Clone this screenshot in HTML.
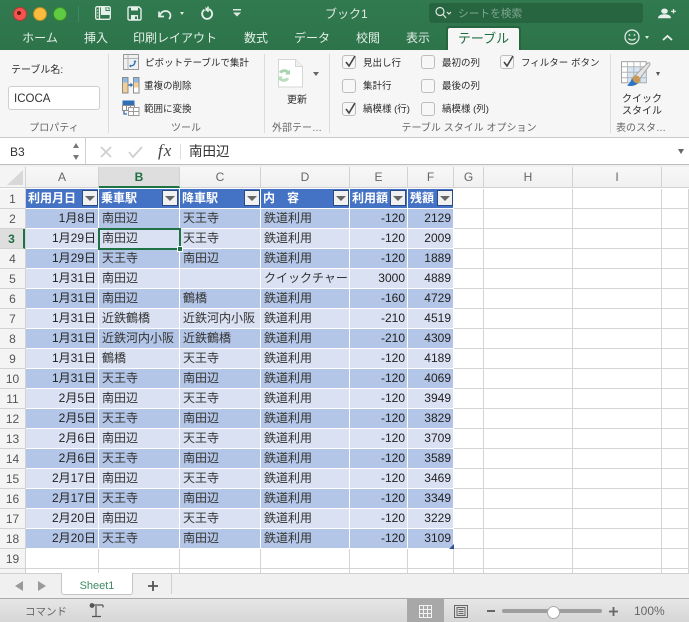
<!DOCTYPE html>
<html lang="ja"><head><meta charset="utf-8"><style>
html,body{margin:0;padding:0}
body{width:689px;height:622px;overflow:hidden;position:relative;background:#fff;font-family:"Liberation Sans","Noto Sans CJK JP",sans-serif;color:#222}
.a{position:absolute;white-space:nowrap}
svg{position:absolute;overflow:visible}
.tab{top:30px;font-size:12px;line-height:17px;color:#e4efe8;transform:translateX(-50%)}
.rl{font-size:9.5px;line-height:14px;color:#2a2a2a}
.gl{top:122px;font-size:10px;line-height:13px;color:#666;transform:translateX(-50%)}
.sep{top:54px;width:1px;height:79px;background:#dcdcdc}
.cb{width:12px;height:12px;background:#f7f7f7;border:1px solid #bdbdbd;border-radius:3px}
.ch{top:167px;height:21px;line-height:20px;font-size:12px;color:#666;text-align:center;background:linear-gradient(#f8f8f8,#f0f0f0);border-right:1px solid #d2d2d2;border-bottom:1px solid #d2d2d2;box-sizing:border-box}
.rh{left:0;width:25px;height:20px;line-height:20px;font-size:12px;color:#555;text-align:center;background:#f4f4f4;border-bottom:1px solid #d2d2d2;box-sizing:border-box}
table{position:absolute;left:26px;top:189px;border-collapse:separate;border-spacing:0;table-layout:fixed;width:663px;font-size:12px}
td{height:19px;padding:0 2px 0 3px;border-right:1px solid #d4d4d4;border-bottom:1px solid #d4d4d4;white-space:nowrap;overflow:hidden;line-height:19px;color:#333}
tr.h td.t{background:#4472c4;color:#fff;font-weight:bold;border-right:1px solid #fff;border-bottom:1px solid #fff;padding:0 2px}
tr.o td.t{background:#b4c6e7;border-right:1px solid #fff;border-bottom:1px solid #fff}
tr.e td.t{background:#d9e1f2;border-right:1px solid #fff;border-bottom:1px solid #fff}
td.r{text-align:right;padding-right:2px;color:#222}
.fb{width:14px;height:14px;background:#f1f1f1;border:1px solid #2a4a85;top:190px}
.fb:after{content:"";position:absolute;left:2px;top:5px;border-left:5px solid transparent;border-right:5px solid transparent;border-top:5px solid #666}
</style></head><body>

<!-- title bar -->
<div class="a" style="left:0;top:0;width:689px;height:50px;background:linear-gradient(#31794f,#2d744a)"></div>
<div class="a" style="left:13px;top:7px;width:12px;height:12px;border-radius:50%;background:#f2544e;border:.5px solid #b03a36"></div>
<div class="a" style="left:17px;top:11px;width:4px;height:4px;border-radius:50%;background:#6d1712"></div>
<div class="a" style="left:33px;top:7px;width:12px;height:12px;border-radius:50%;background:#fcbb3d;border:.5px solid #b98a2a"></div>
<div class="a" style="left:53px;top:7px;width:12px;height:12px;border-radius:50%;background:#5fcb42;border:.5px solid #3f8f2c"></div>
<div class="a" style="left:78px;top:6px;width:1px;height:16px;background:#3f8860"></div>

<svg style="left:95px;top:6px" width="16" height="14" viewBox="0 0 16 14" fill="none" stroke="#e6f0ea" stroke-width="1.300"><rect x=".7" y=".7" width="14.600" height="12.600" rx="1.500"/><path d="M4.500 1v12"/><path d="M6 .7h5.500L15.300 4.500v4.500H6z" fill="#e6f0ea" stroke="none"/><path d="M11 1v3.500h4" stroke="#31794f" stroke-width=".9"/><path d="M2 4h1.300M2 7h1.300M2 10h1.300" stroke-width="1"/></svg>
<svg style="left:127px;top:6px" width="15" height="15" viewBox="0 0 15 15" fill="none" stroke="#e6f0ea" stroke-width="1.400"><path d="M1 2.200C1 1.500 1.500 1 2.200 1H12l2 2v9.800c0 .7-.5 1.200-1.200 1.200H2.200C1.500 14 1 13.500 1 12.800z"/><rect x="4" y="1" width="7" height="3.500" fill="#e6f0ea" stroke="none"/><rect x="4" y="9" width="7" height="5" fill="#e6f0ea" stroke="none"/><rect x="8" y="10.500" width="2" height="2.500" fill="#31794f" stroke="none"/></svg>
<svg style="left:157px;top:8px" width="16" height="12" viewBox="0 0 16 12" fill="none" stroke="#e6f0ea" stroke-width="1.700"><path d="M2 3.500v5h5"/><path d="M2.500 8C4 4 6 3 8.500 3c3 0 5 2 5 4.500 0 1.200-.5 2.500-1.500 3.500"/></svg>
<div class="a" style="left:180px;top:12px;border-left:2.500px solid transparent;border-right:2.500px solid transparent;border-top:3px solid #dfe9e3"></div>
<svg style="left:200px;top:6px" width="14" height="15" viewBox="0 0 14 15" fill="none" stroke="#e6f0ea" stroke-width="1.800"><path d="M9 3.200A5 5 0 1 1 4.500 3.600"/><path d="M8 .5v5.500" stroke-width="1.600"/><path d="M5.500 1l3.500 2.500-3.500 2" stroke="none" fill="#e6f0ea"/></svg>
<svg style="left:233px;top:9px" width="9" height="8" viewBox="0 0 9 8" fill="#dfe9e3"><rect x="0" y="0" width="8" height="1.500"/><path d="M0 3.500h8L4 7.500z"/></svg>
<div class="a" style="left:325px;top:6px;font-size:12px;line-height:16px;color:#dfe9e3">ブック1</div>
<div class="a" style="left:429px;top:3px;width:214px;height:20px;border-radius:3px;background:#266540"></div>
<svg style="left:435px;top:7px" width="18" height="13" viewBox="0 0 18 13" fill="none" stroke="#dce8e0" stroke-width="1.200"><circle cx="5" cy="4.500" r="4"/><path d="M8 7.500l3 3.500"/><path d="M12 5l2 2 2-2"/></svg>
<div class="a" style="left:458px;top:7px;font-size:10.700px;line-height:15px;color:#7fa791">シートを検索</div>
<svg style="left:658px;top:8px" width="18" height="11" viewBox="0 0 18 14" preserveAspectRatio="none" fill="#e6f0ea"><circle cx="6.500" cy="4" r="3.300"/><path d="M0 13c0-3.500 3-5 6.500-5s6.500 1.500 6.500 5z"/><path d="M13 3.500h1.800V1.500h1.400v2H18v1.400h-1.800v2h-1.400v-2H13z"/></svg>

<div class="a tab" style="left:40px">ホーム</div>
<div class="a tab" style="left:96px">挿入</div>
<div class="a tab" style="left:175px">印刷レイアウト</div>
<div class="a tab" style="left:256px">数式</div>
<div class="a tab" style="left:312px">データ</div>
<div class="a tab" style="left:368px">校閲</div>
<div class="a tab" style="left:418px">表示</div>
<div class="a" style="left:446px;top:26px;width:75px;height:24px;background:#266540;border-radius:3px 3px 0 0"></div>
<div class="a" style="left:448px;top:28px;width:71px;height:22px;background:#f6f6f6;border-radius:2px 2px 0 0;text-align:center;font-size:13px;line-height:21px;color:#1f6e42">テーブル</div>
<svg style="left:624px;top:29px" width="18" height="16" viewBox="0 0 18 16" fill="none" stroke="#e6f0ea" stroke-width="1.200"><circle cx="8" cy="8" r="7"/><circle cx="5.500" cy="6" r=".9" fill="#e6f0ea" stroke="none"/><circle cx="10.500" cy="6" r=".9" fill="#e6f0ea" stroke="none"/><path d="M4.500 9.500c1 2 6 2 7 0"/></svg>
<div class="a" style="left:645px;top:36px;border-left:2.500px solid transparent;border-right:2.500px solid transparent;border-top:3px solid #dfe9e3"></div>
<svg style="left:662px;top:34px" width="11" height="7" viewBox="0 0 11 7" fill="none" stroke="#e6f0ea" stroke-width="1.800"><path d="M1 6l4.500-4L10 6"/></svg>

<!-- ribbon -->
<div class="a" style="left:0;top:50px;width:689px;height:87px;background:#f6f6f6;border-bottom:1px solid #c8c8c8"></div>
<div class="a sep" style="left:108px"></div>
<div class="a sep" style="left:264px"></div>
<div class="a sep" style="left:329px"></div>
<div class="a sep" style="left:610px"></div>

<div class="a rl" style="left:11px;top:64px;font-size:10px">テーブル名:</div>
<div class="a" style="left:8px;top:86px;width:85px;height:22px;background:#fff;border:1px solid #cfcfcf;border-radius:3px;font-size:11.500px;line-height:25px;padding-left:5px;color:#333">ICOCA</div>
<div class="a gl" style="left:54px">プロパティ</div>

<svg style="left:123px;top:54px" width="17" height="16" viewBox="0 0 17 16" fill="none"><rect x=".5" y=".5" width="15" height="15" fill="#eef0f2" stroke="#9a9a9a"/><path d="M1 4.500h14M5 1v14" stroke="#b5b5b5"/><path d="M7 12c3 0 5-1.500 5-5" stroke="#2f6fb5" stroke-width="1.300"/><path d="M10.500 8l1.500-2 1.500 2zM8 10.500l-2 1.500 2 1.500z" fill="#2f6fb5"/></svg>
<div class="a rl" style="left:145px;top:57px">ピボットテーブルで集計</div>
<svg style="left:122px;top:77px" width="18" height="17" viewBox="0 0 18 17"><rect x=".5" y=".5" width="5.500" height="15.500" fill="#fff" stroke="#8b8b8b"/><rect x="1" y="1" width="4.500" height="4.500" fill="#8eb9e4"/><rect x="1" y="5.500" width="4.500" height="5" fill="#f2cf94"/><rect x="1" y="10.500" width="4.500" height="5" fill="#f2cf94"/><path d="M6.500 8H9" stroke="#2f6fb5" stroke-width="1.500"/><path d="M8.500 5.500L11 8l-2.500 2.500z" fill="#2f6fb5"/><rect x="11.500" y=".5" width="5.500" height="15.500" fill="#fff" stroke="#8b8b8b"/><rect x="12" y="1" width="4.500" height="4.500" fill="#8eb9e4"/><rect x="12" y="5.500" width="4.500" height="5" fill="#f2cf94"/></svg>
<div class="a rl" style="left:144px;top:80px">重複の削除</div>
<svg style="left:122px;top:100px" width="18" height="16" viewBox="0 0 18 16" fill="none"><rect x=".5" y=".5" width="12" height="5" fill="#2f6fb5"/><rect x=".5" y="5.500" width="12" height="5" fill="#fff" stroke="#8b8b8b"/><path d="M4.500 5.500v5M8.500 5.500v5" stroke="#8b8b8b"/><rect x="6.500" y="7.500" width="10.500" height="8" fill="#fff" stroke="#9a9a9a"/><path d="M6.500 11.500H17M11.500 7.500v8" stroke="#9a9a9a"/><path d="M2 11v3h3" stroke="#2f6fb5" stroke-width="1.300"/></svg>
<div class="a rl" style="left:144px;top:103px">範囲に変換</div>
<div class="a gl" style="left:186px">ツール</div>

<svg style="left:278px;top:59px" width="28" height="29" viewBox="0 0 28 29" fill="none"><path d="M.5.500h17l7 7v20.500H.5z" fill="#fff" stroke="#d6d6d6"/><path d="M17.500.500v7h7" stroke="#d6d6d6" fill="#f0f0f0"/><path d="M1 13c1.500-3 7-4 9.500-1l1.500-1.500v5h-5l1.500-1.500c-1.500-1.500-4-1-5 .5z" fill="#a9d3af"/><path d="M11 20c-1.500 3-7 4-9.500 1L0 22.500v-5h5L3.500 19c1.500 1.500 4 1 5-.5z" fill="#b9ddbc"/></svg>
<div class="a" style="left:313px;top:72px;border-left:3px solid transparent;border-right:3px solid transparent;border-top:4px solid #666"></div>
<div class="a rl" style="left:287px;top:94px;font-size:10px">更新</div>
<div class="a gl" style="left:297px">外部テー…</div>

<div class="a cb" style="left:342px;top:55px"></div>
<svg style="left:344px;top:55px" width="14" height="14" viewBox="0 0 14 14" fill="none" stroke="#444" stroke-width="1.600"><path d="M2 7l3 4 6-10"/></svg>
<div class="a rl" style="left:363px;top:57px">見出し行</div>
<div class="a cb" style="left:342px;top:79px"></div>
<div class="a rl" style="left:363px;top:80px">集計行</div>
<div class="a cb" style="left:342px;top:102px"></div>
<svg style="left:344px;top:102px" width="14" height="14" viewBox="0 0 14 14" fill="none" stroke="#444" stroke-width="1.600"><path d="M2 7l3 4 6-10"/></svg>
<div class="a rl" style="left:363px;top:103px">縞模様 (行)</div>

<div class="a cb" style="left:421px;top:55px"></div>
<div class="a rl" style="left:442px;top:57px">最初の列</div>
<div class="a cb" style="left:421px;top:79px"></div>
<div class="a rl" style="left:442px;top:80px">最後の列</div>
<div class="a cb" style="left:421px;top:102px"></div>
<div class="a rl" style="left:442px;top:103px">縞模様 (列)</div>

<div class="a cb" style="left:500px;top:55px"></div>
<svg style="left:502px;top:55px" width="14" height="14" viewBox="0 0 14 14" fill="none" stroke="#444" stroke-width="1.600"><path d="M2 7l3 4 6-10"/></svg>
<div class="a rl" style="left:521px;top:57px">フィルター ボタン</div>
<div class="a gl" style="left:469px">テーブル スタイル オプション</div>

<svg style="left:621px;top:61px" width="33" height="28" viewBox="0 0 36 30" fill="none"><rect x=".5" y=".5" width="27" height="23" fill="#fff" stroke="#9a9a9a"/><rect x="7" y="6" width="20" height="17" fill="#d6e5f4"/><path d="M7 1v22M14 1v22M21 1v22M1 6h26M1 12h26M1 18h26" stroke="#b4b4b4"/><path d="M14 17L29 2c2-1 3 0 2.500 2L19 21z" fill="#e4e4e4" stroke="#a0a0a0"/><circle cx="16.500" cy="20" r="4.500" fill="#c99a55"/><path d="M12 18c1 4 3 6 7 6-4 3-10 4-12.500 2 2-1 4-3 5.500-8z" fill="#2e74c6"/></svg>
<div class="a" style="left:656px;top:72px;border-left:2.500px solid transparent;border-right:2.500px solid transparent;border-top:4px solid #555"></div>
<div class="a rl" style="left:622px;top:94px;line-height:12px;font-size:10px">クイック<br>スタイル</div>
<div class="a gl" style="left:641px">表のスタ…</div>

<!-- formula bar -->
<div class="a" style="left:0;top:137px;width:689px;height:30px;background:#f3f3f3;border-top:1px solid #c9c9c9;box-sizing:border-box"></div>
<div class="a" style="left:0;top:138px;width:85px;height:26px;background:#fff;border-right:1px solid #d0d0d0;font-size:12px;line-height:28px;text-indent:10px;color:#333">B3</div>
<div class="a" style="left:73px;top:143px;border-left:3.500px solid transparent;border-right:3.500px solid transparent;border-bottom:5px solid #777"></div>
<div class="a" style="left:73px;top:155px;border-left:3.500px solid transparent;border-right:3.500px solid transparent;border-top:5px solid #777"></div>
<div class="a" style="left:86px;top:138px;width:603px;height:26px;background:#fff"></div>
<svg style="left:100px;top:146px" width="12" height="12" viewBox="0 0 12 12" fill="none" stroke="#cfcfcf" stroke-width="1.800"><path d="M1 1l10 10M11 1L1 11"/></svg>
<svg style="left:128px;top:146px" width="15" height="12" viewBox="0 0 15 12" fill="none" stroke="#cfcfcf" stroke-width="1.800"><path d="M1 6l4 5L14 1"/></svg>
<div class="a" style="left:158px;top:142px;font-family:'Liberation Serif',serif;font-style:italic;font-size:17px;line-height:18px;letter-spacing:1px;color:#444">fx</div>
<div class="a" style="left:180px;top:144px;width:1px;height:15px;background:#ddd"></div>
<div class="a" style="left:189px;top:143px;font-size:13.500px;line-height:17px;color:#333">南田辺</div>
<div class="a" style="left:678px;top:149px;border-left:3.500px solid transparent;border-right:3.500px solid transparent;border-top:5px solid #666"></div>
<div class="a" style="left:0;top:164px;width:689px;height:3px;background:#f0f0f0;border-top:1px solid #bdbdbd;box-sizing:border-box"></div>

<!-- col headers -->
<div class="a ch" style="left:0;width:26px;background:#f4f4f4"></div>
<svg style="left:7px;top:170px" width="16" height="15"><path d="M16 0v15H0z" fill="#d8d8d8"/></svg>
<div class="a ch" style="left:26px;width:73px">A</div>
<div class="a ch" style="left:99px;width:81px;background:#dedede;color:#1f6e42;font-weight:bold;border-bottom:2px solid #1f7244">B</div>
<div class="a ch" style="left:180px;width:81px">C</div>
<div class="a ch" style="left:261px;width:89px">D</div>
<div class="a ch" style="left:350px;width:58px">E</div>
<div class="a ch" style="left:408px;width:46px">F</div>
<div class="a ch" style="left:454px;width:30px">G</div>
<div class="a ch" style="left:484px;width:89px">H</div>
<div class="a ch" style="left:573px;width:89px">I</div>
<div class="a ch" style="left:662px;width:27px;border-right:0"></div>

<!-- row headers -->
<div class="a rh" style="top:189px">1</div>
<div class="a rh" style="top:209px">2</div>
<div class="a rh" style="top:229px;background:#dedede;color:#1f6e42;font-weight:bold;border-right:2px solid #1f7244">3</div>
<div class="a rh" style="top:249px">4</div>
<div class="a rh" style="top:269px">5</div>
<div class="a rh" style="top:289px">6</div>
<div class="a rh" style="top:309px">7</div>
<div class="a rh" style="top:329px">8</div>
<div class="a rh" style="top:349px">9</div>
<div class="a rh" style="top:369px">10</div>
<div class="a rh" style="top:389px">11</div>
<div class="a rh" style="top:409px">12</div>
<div class="a rh" style="top:429px">13</div>
<div class="a rh" style="top:449px">14</div>
<div class="a rh" style="top:469px">15</div>
<div class="a rh" style="top:489px">16</div>
<div class="a rh" style="top:509px">17</div>
<div class="a rh" style="top:529px">18</div>
<div class="a rh" style="top:549px">19</div>
<div class="a rh" style="top:569px;height:4px;border:0"></div>
<div class="a" style="left:25px;top:167px;width:1px;height:406px;background:#d2d2d2"></div>

<table>
<colgroup><col style="width:73px"><col style="width:81px"><col style="width:81px"><col style="width:89px"><col style="width:58px"><col style="width:46px"><col style="width:30px"><col style="width:89px"><col style="width:89px"><col style="width:27px"></colgroup>
<tr class="h"><td class="t">利用月日</td><td class="t">乗車駅</td><td class="t">降車駅</td><td class="t">内　容</td><td class="t">利用額</td><td class="t">残額</td><td></td><td></td><td></td><td></td></tr>
<tr class="o"><td class="t r">1月8日</td><td class="t">南田辺</td><td class="t">天王寺</td><td class="t">鉄道利用</td><td class="t r">-120</td><td class="t r">2129</td><td></td><td></td><td></td><td></td></tr>
<tr class="e"><td class="t r">1月29日</td><td class="t">南田辺</td><td class="t">天王寺</td><td class="t">鉄道利用</td><td class="t r">-120</td><td class="t r">2009</td><td></td><td></td><td></td><td></td></tr>
<tr class="o"><td class="t r">1月29日</td><td class="t">天王寺</td><td class="t">南田辺</td><td class="t">鉄道利用</td><td class="t r">-120</td><td class="t r">1889</td><td></td><td></td><td></td><td></td></tr>
<tr class="e"><td class="t r">1月31日</td><td class="t">南田辺</td><td class="t"></td><td class="t">クイックチャー</td><td class="t r">3000</td><td class="t r">4889</td><td></td><td></td><td></td><td></td></tr>
<tr class="o"><td class="t r">1月31日</td><td class="t">南田辺</td><td class="t">鶴橋</td><td class="t">鉄道利用</td><td class="t r">-160</td><td class="t r">4729</td><td></td><td></td><td></td><td></td></tr>
<tr class="e"><td class="t r">1月31日</td><td class="t">近鉄鶴橋</td><td class="t">近鉄河内小阪</td><td class="t">鉄道利用</td><td class="t r">-210</td><td class="t r">4519</td><td></td><td></td><td></td><td></td></tr>
<tr class="o"><td class="t r">1月31日</td><td class="t">近鉄河内小阪</td><td class="t">近鉄鶴橋</td><td class="t">鉄道利用</td><td class="t r">-210</td><td class="t r">4309</td><td></td><td></td><td></td><td></td></tr>
<tr class="e"><td class="t r">1月31日</td><td class="t">鶴橋</td><td class="t">天王寺</td><td class="t">鉄道利用</td><td class="t r">-120</td><td class="t r">4189</td><td></td><td></td><td></td><td></td></tr>
<tr class="o"><td class="t r">1月31日</td><td class="t">天王寺</td><td class="t">南田辺</td><td class="t">鉄道利用</td><td class="t r">-120</td><td class="t r">4069</td><td></td><td></td><td></td><td></td></tr>
<tr class="e"><td class="t r">2月5日</td><td class="t">南田辺</td><td class="t">天王寺</td><td class="t">鉄道利用</td><td class="t r">-120</td><td class="t r">3949</td><td></td><td></td><td></td><td></td></tr>
<tr class="o"><td class="t r">2月5日</td><td class="t">天王寺</td><td class="t">南田辺</td><td class="t">鉄道利用</td><td class="t r">-120</td><td class="t r">3829</td><td></td><td></td><td></td><td></td></tr>
<tr class="e"><td class="t r">2月6日</td><td class="t">南田辺</td><td class="t">天王寺</td><td class="t">鉄道利用</td><td class="t r">-120</td><td class="t r">3709</td><td></td><td></td><td></td><td></td></tr>
<tr class="o"><td class="t r">2月6日</td><td class="t">天王寺</td><td class="t">南田辺</td><td class="t">鉄道利用</td><td class="t r">-120</td><td class="t r">3589</td><td></td><td></td><td></td><td></td></tr>
<tr class="e"><td class="t r">2月17日</td><td class="t">南田辺</td><td class="t">天王寺</td><td class="t">鉄道利用</td><td class="t r">-120</td><td class="t r">3469</td><td></td><td></td><td></td><td></td></tr>
<tr class="o"><td class="t r">2月17日</td><td class="t">天王寺</td><td class="t">南田辺</td><td class="t">鉄道利用</td><td class="t r">-120</td><td class="t r">3349</td><td></td><td></td><td></td><td></td></tr>
<tr class="e"><td class="t r">2月20日</td><td class="t">南田辺</td><td class="t">天王寺</td><td class="t">鉄道利用</td><td class="t r">-120</td><td class="t r">3229</td><td></td><td></td><td></td><td></td></tr>
<tr class="o"><td class="t r">2月20日</td><td class="t">天王寺</td><td class="t">南田辺</td><td class="t">鉄道利用</td><td class="t r">-120</td><td class="t r">3109</td><td></td><td></td><td></td><td></td></tr>
<tr><td></td><td></td><td></td><td></td><td></td><td></td><td></td><td></td><td></td><td></td></tr>
<tr><td></td><td></td><td></td><td></td><td></td><td></td><td></td><td></td><td></td><td></td></tr>
</table>

<!-- filter buttons -->
<div class="a fb" style="left:82px"></div>
<div class="a fb" style="left:162px"></div>
<div class="a fb" style="left:244px"></div>
<div class="a fb" style="left:333px"></div>
<div class="a fb" style="left:390px"></div>
<div class="a fb" style="left:437px"></div>
<!-- table corner -->
<svg style="left:449px;top:544px" width="5" height="5"><path d="M5 0v5H0z" fill="#2f528f"/></svg>
<!-- selection -->
<div class="a" style="left:98px;top:228px;width:83px;height:22px;border:2px solid #1f7244;box-sizing:border-box"></div>
<div class="a" style="left:177px;top:246px;width:6px;height:6px;background:#1f7244;border:1px solid #fff;box-sizing:border-box"></div>

<!-- sheet tabs -->
<div class="a" style="left:0;top:573px;width:689px;height:26px;background:#f0f0f0;border-top:1px solid #cfcfcf;border-bottom:1px solid #a9a9a9;box-sizing:border-box"></div>
<div class="a" style="left:15px;top:581px;border-top:5.500px solid transparent;border-bottom:5.500px solid transparent;border-right:8px solid #9a9a9a"></div>
<div class="a" style="left:38px;top:581px;border-top:5.500px solid transparent;border-bottom:5.500px solid transparent;border-left:8px solid #9a9a9a"></div>
<div class="a" style="left:61px;top:573px;width:72px;height:22px;background:#fff;border:1px solid #c4c4c4;border-top:0;border-radius:0 0 3px 3px;box-sizing:border-box;text-align:center;font-size:11px;line-height:27px;color:#3f8a63">Sheet1</div>
<svg style="left:147px;top:580px" width="12" height="12" viewBox="0 0 12 12" stroke="#555" stroke-width="1.800"><path d="M1 6h10M6 1v10"/></svg>
<div class="a" style="left:171px;top:574px;width:1px;height:20px;background:#cfcfcf"></div>

<!-- status bar -->
<div class="a" style="left:0;top:599px;width:689px;height:23px;background:linear-gradient(#e6e6e6,#d6d6d6)"></div>
<div class="a" style="left:25px;top:605px;font-size:10.500px;line-height:14px;color:#666">コマンド</div>
<svg style="left:89px;top:603px" width="16" height="15" viewBox="0 0 16 15" fill="none" stroke="#555" stroke-width="1.200"><circle cx="3" cy="2.500" r="1.800" fill="#555"/><path d="M5 2h9M7 3v10M3 13.500h9"/><path d="M14 2v2.500"/></svg>
<div class="a" style="left:407px;top:599px;width:37px;height:23px;background:#a8a8a8"></div>
<svg style="left:419px;top:605px" width="13" height="13" viewBox="0 0 13 13" fill="none" stroke="#f2f2f2"><rect x=".5" y=".5" width="12" height="12"/><path d="M4.500 1v11M8.500 1v11M1 4.500h11M1 8.500h11"/></svg>
<svg style="left:454px;top:605px" width="14" height="13" viewBox="0 0 14 13" fill="none" stroke="#666"><rect x=".5" y=".5" width="13" height="12"/><rect x="3" y="2.500" width="8" height="8"/><path d="M4.500 4.500h5M4.500 6.500h5M4.500 8.500h5"/></svg>
<div class="a" style="left:487px;top:610px;width:8px;height:2px;background:#666"></div>
<div class="a" style="left:502px;top:609px;width:100px;height:4px;border-radius:2px;background:#9e9e9e"></div>
<div class="a" style="left:547px;top:606px;width:11px;height:11px;border-radius:50%;background:#fff;border:.5px solid #aaa"></div>
<svg style="left:609px;top:607px" width="9" height="9" viewBox="0 0 9 9" stroke="#666" stroke-width="1.800"><path d="M0 4.500h9M4.500 0v9"/></svg>
<div class="a" style="left:634px;top:604px;font-size:12px;line-height:15px;color:#666">100%</div>
</body></html>
